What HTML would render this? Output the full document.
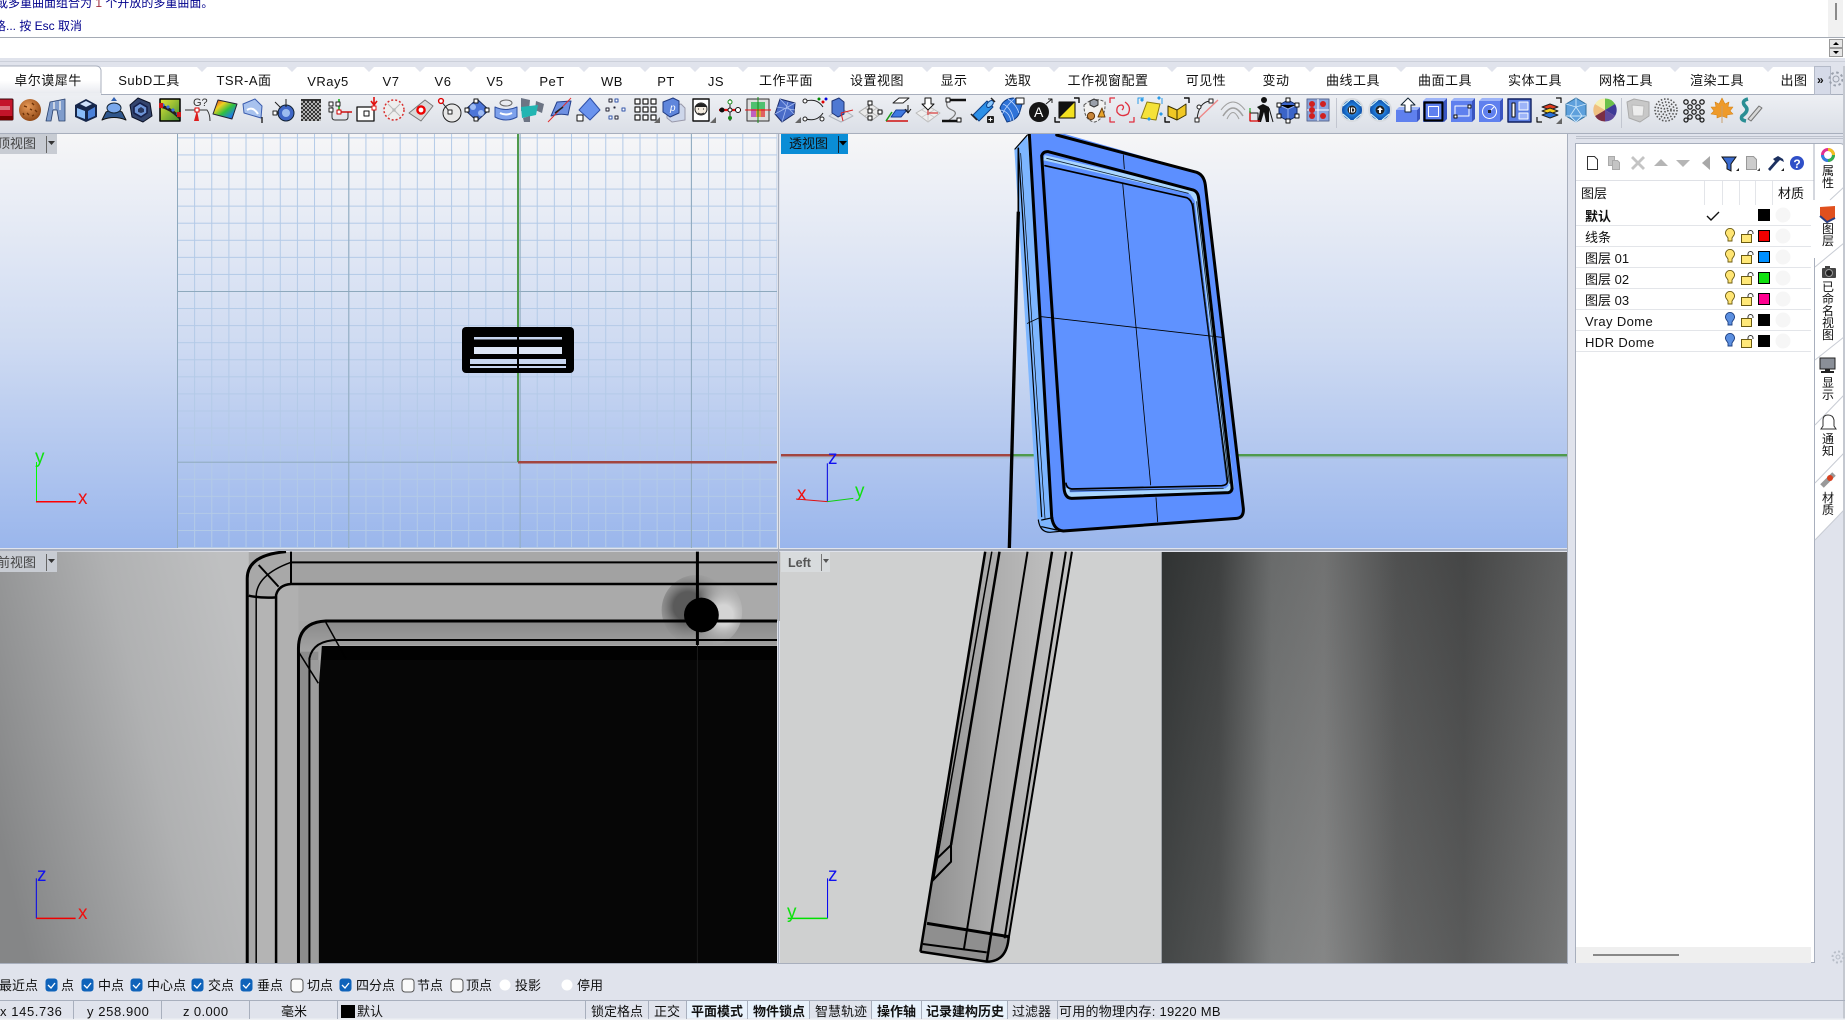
<!DOCTYPE html>
<html lang="zh"><head><meta charset="utf-8"><title>Rhino</title>
<style>
html,body{margin:0;padding:0;width:1845px;height:1020px;overflow:hidden;background:#e0e3ec}
body{position:relative;font-family:"Liberation Sans","Noto Sans CJK SC",sans-serif;font-size:13px;color:#111}
svg.all{position:absolute;left:0;top:0}
.t{position:absolute;white-space:nowrap;line-height:18px;height:18px}
.c{transform:translateX(-50%);letter-spacing:.5px}
.v{left:1828px;transform:translateX(-50%);line-height:14px;height:14px;font-size:12px}
.cmd{color:#00008c;font-size:12px}
.b{font-weight:bold}
</style></head><body>
<svg class="all" width="1845" height="1020" viewBox="0 0 1845 1020" xmlns="http://www.w3.org/2000/svg">
<defs>
<linearGradient id="vp" x1="0" y1="0" x2="0" y2="1"><stop offset="0" stop-color="#f6f6f7"/><stop offset=".5" stop-color="#cfdbf2"/><stop offset="1" stop-color="#9ab6ec"/></linearGradient>
<linearGradient id="tb" x1="0" y1="0" x2="0" y2="1"><stop offset="0" stop-color="#eef0f4"/><stop offset="1" stop-color="#dadee6"/></linearGradient>
<linearGradient id="act" x1="0" y1="0" x2="0" y2="1"><stop offset="0" stop-color="#fff"/><stop offset=".5" stop-color="#fff"/><stop offset="1" stop-color="#e6e8ee"/></linearGradient>
<linearGradient id="fg" x1="0" y1=".7" x2="1" y2=".3"><stop offset="0" stop-color="#858687"/><stop offset=".6" stop-color="#b0b1b2"/><stop offset="1" stop-color="#bfc0c1"/></linearGradient>
<linearGradient id="dk" x1="0" y1="0" x2="1" y2="0"><stop offset="0" stop-color="#343737"/><stop offset=".14" stop-color="#434545"/><stop offset=".27" stop-color="#727474"/><stop offset=".40" stop-color="#7b7c7c"/><stop offset=".58" stop-color="#565757"/><stop offset=".745" stop-color="#4b4c4c"/><stop offset="1" stop-color="#6a6b6b"/></linearGradient>
<linearGradient id="dkv" x1="0" y1="0" x2="0" y2="1"><stop offset="0" stop-color="#000" stop-opacity=".08"/><stop offset="1" stop-color="#fff" stop-opacity=".08"/></linearGradient>
<linearGradient id="bl" x1="0" y1="0" x2="0" y2="1"><stop offset="0" stop-color="#a6c0ff"/><stop offset="1" stop-color="#4c6ee4"/></linearGradient>
<linearGradient id="rb" x1="0" y1="0" x2="1" y2="1"><stop offset="0" stop-color="#e02020"/><stop offset=".3" stop-color="#f0d020"/><stop offset=".55" stop-color="#30c040"/><stop offset=".8" stop-color="#2080e0"/><stop offset="1" stop-color="#3020a0"/></linearGradient>
<linearGradient id="yl" x1="0" y1="0" x2="1" y2="1"><stop offset="0" stop-color="#fff6a0"/><stop offset="1" stop-color="#eec820"/></linearGradient>
<linearGradient id="gl" x1="0" y1="0" x2="1" y2="1"><stop offset="0" stop-color="#e8e838"/><stop offset="1" stop-color="#3a8c30"/></linearGradient>
<radialGradient id="ball" cx=".4" cy=".35" r=".7"><stop offset="0" stop-color="#e89a58"/><stop offset="1" stop-color="#8c4412"/></radialGradient>
<radialGradient id="ir" cx=".5" cy=".5" r=".5"><stop offset="0" stop-color="#bfe0ff"/><stop offset=".55" stop-color="#1d7ad8"/><stop offset="1" stop-color="#0d4ea8"/></radialGradient>
<radialGradient id="hd" cx=".38" cy=".45" r=".6"><stop offset=".35" stop-color="#5a5a5a"/><stop offset="1" stop-color="#a8a8a8" stop-opacity="0"/></radialGradient>
<radialGradient id="hl" cx=".7" cy=".55" r=".5"><stop offset=".3" stop-color="#d4d4d4"/><stop offset="1" stop-color="#a8a8a8" stop-opacity="0"/></radialGradient>
<linearGradient id="tp" x1="0" y1="0" x2="0" y2="1"><stop offset="0" stop-color="#8a8a8a"/><stop offset=".7" stop-color="#b0b0b0"/><stop offset="1" stop-color="#8a8a8a"/></linearGradient>
<linearGradient id="sd" x1="0" y1="0" x2="1" y2="0"><stop offset="0" stop-color="#8d8d8d"/><stop offset=".5" stop-color="#aeaeae"/><stop offset="1" stop-color="#c4c4c4"/></linearGradient>
<pattern id="mi" patternUnits="userSpaceOnUse" x="177" y="120.3" width="17.13" height="17.07"><path d="M.5 0V17.07M0 .5H17.13" stroke="#b3cae7" fill="none"/></pattern>
<pattern id="ma" patternUnits="userSpaceOnUse" x="177" y="120.3" width="171.3" height="170.7"><path d="M.5 0V170.7M0 .5H171.3" stroke="#8ea9bd" fill="none"/></pattern>
</defs>

<!-- top command area -->
<rect x="0" y="0" width="1845" height="37" fill="#fff"/>
<rect x="1828" y="0" width="15" height="37" fill="#f1f1f1"/>
<rect x="1835" y="3" width="2" height="17" fill="#8a8a8a"/>
<rect x="0" y="37" width="1845" height="1" fill="#a5abb5"/>
<rect x="0" y="38" width="1845" height="20" fill="#fff"/>
<rect x="1829.5" y="39.5" width="13" height="8" fill="#e6e6e6" stroke="#999"/><path d="M1833 45h6l-3-3z" fill="#000"/>
<rect x="1829.5" y="48.5" width="13" height="8" fill="#e6e6e6" stroke="#999"/><path d="M1833 51h6l-3 3z" fill="#000"/>
<rect x="0" y="61" width="1845" height="1" fill="#ccd0da"/>

<!-- tabs -->
<rect x="0" y="67" width="1814" height="27" fill="#fff"/>
<g fill="#e0e3ec">
<path d="M197 67h10l-5 5zM287 67h10l-5 5zM364 67h10l-5 5zM415 67h10l-5 5zM466 67h10l-5 5zM520 67h10l-5 5zM579 67h10l-5 5zM640 67h10l-5 5zM690 67h10l-5 5zM738 67h10l-5 5zM829 67h10l-5 5zM922 67h10l-5 5zM984 67h10l-5 5zM1049 67h10l-5 5zM1167 67h10l-5 5zM1244 67h10l-5 5zM1305 67h10l-5 5zM1396 67h10l-5 5zM1487 67h10l-5 5zM1580 67h10l-5 5zM1670 67h10l-5 5zM1763 67h10l-5 5z"/>
</g>
<rect x="0" y="94" width="1845" height="40" fill="url(#tb)"/>
<rect x="0" y="94" width="1845" height="1" fill="#a8afbd"/>
<rect x="0" y="133" width="1845" height="1" fill="#a8afbd"/>
<path d="M-2 95V66H96Q100 66 101 70V95Z" fill="url(#act)"/>
<path d="M-2 66H96Q100 66 101 70V94" fill="none" stroke="#a8afbd"/>
<rect x="0" y="93" width="101" height="3" fill="#eceef2"/>
<rect x="1814.5" y="66.5" width="16" height="28" fill="#d5dae8" stroke="#b4bac8"/>

<!-- toolbar icons -->
<g stroke-linejoin="round">
<g transform="translate(5,110)"><rect x="-9" y="-11" width="17" height="21" rx="1" fill="#c4142a" stroke="#3a0a10"/><rect x="-9" y="6" width="17" height="4" fill="#700"/><path d="M-8-3H5M-8-1H5" stroke="#f5d0d0" stroke-width=".9" fill="none"/></g>
<g transform="translate(30,110)"><circle r="11" fill="url(#ball)"/><path d="M-6-4l3 1M2-7l2 2M5 0l2 2M-3 3l2 2M0-1l2 1M-7 3l1 2M2 6l2-1" stroke="#6d3208" stroke-width="1.4"/></g>
<g transform="translate(56,110)"><path d="M-10 11L-6-8 9-11V11H3L1 0-3 0-5 11Z" fill="#7f9ccc" stroke="#29406c" stroke-width=".8"/><path d="M-2-8V-1M4-9V0" stroke="#eee" stroke-width="1.4"/></g>
<g transform="translate(86,110)"><path d="M-11-5L0-11 11-5V7L0 12-11 7Z" fill="#16264a"/><path d="M-9-2L-1 1V9L-9 6Z" fill="#8abcf8"/><path d="M2 1L9-3V6L2 9Z" fill="#4a80d8"/><path d="M-6-6L0-9 6-6 0-3Z" fill="#cfe0fa"/></g>
<g transform="translate(114,110)"><path d="M-12 10L-8 2Q0-3 8 2L12 10Q0 5-12 10Z" fill="#2f568c" stroke="#111"/><ellipse cy="-2" rx="7" ry="5" fill="#7aa8ec" stroke="#123"/><path d="M0-13l-3 4h6z" fill="#3060b0"/></g>
<g transform="translate(141,110)"><path d="M-3-12L9-7 11 6 2 12-9 7-11-5Z" fill="#34456e" stroke="#0c1226"/><path d="M-1-7L6-3 6 3 0 7-7 3-7-3Z" fill="#6f96d8" stroke="#16204a" stroke-width="1.6"/><path d="M0-3L3-1 3 2 0 3-3 2-3-1Z" fill="#27365e"/></g>
<g transform="translate(170,110)"><rect x="-10" y="-11" width="20" height="22" fill="url(#gl)" stroke="#000" stroke-width="1.5"/><path d="M-10-4Q0-2 10 8" stroke="#222" stroke-width="3" fill="none"/><path d="M-8-6l2 2M-3-4l2 2M2-1l2 2M7 3l2 2" stroke="#3b6fe0" stroke-width="3"/><rect x="-11" y="-7" width="4" height="5" fill="#d01818"/><rect x="7" y="2" width="4" height="5" fill="#d01818"/></g>
<g transform="translate(197,110)"><text x="-4" y="-4" font-size="11" font-family="Liberation Sans" fill="#333">G?</text><path d="M-12 0H10Q13 4 13 11" stroke="#333" fill="none"/><path d="M0 0l2 11h-5z" fill="#dd1c1c"/><rect x="-2" y="-2" width="4" height="4" fill="#fff" stroke="#d00"/></g>
<g transform="translate(225,110)"><path d="M-7-10L12-6 7 9-12 4Z" fill="url(#rb)" stroke="#223"/></g>
<g transform="translate(253,110)"><path d="M-10-6L2-11 9-4 8 8-9 3Z" fill="#a8c2ee" stroke="#3a5cae"/><path d="M-6 0Q0-4 5 4" stroke="#fff" stroke-width="2" fill="none"/><path d="M9 7v6" stroke="#222" stroke-width="1.4"/></g>
<g transform="translate(283,110)"><circle cx="3" cy="3" r="8" fill="#3f66c6" stroke="#123"/><circle cx="3" cy="3" r="4" fill="#9cbcf0"/><path d="M3-11v8M-10 3h6M-8-8l6 6" stroke="#222"/><rect x="-10" y="1" width="4" height="4" fill="#fff" stroke="#222"/></g>
<g transform="translate(311,110)"><rect x="-10" y="-11" width="20" height="22" fill="#333"/><path d="M-10-8h20M-10-4h20M-10 0h20M-10 4h20M-10 8h20" stroke="#ddd" stroke-width="1.5" stroke-dasharray="2 2"/><path d="M-10-6h20M-10-2h20M-10 2h20M-10 6h20M-10 10h20" stroke="#ddd" stroke-width="1.5" stroke-dasharray="2 2" stroke-dashoffset="2"/></g>
<g transform="translate(339,110)"><path d="M-7-3V7Q-7 10-4 10H6Q9 10 9 7V2" fill="none" stroke="#333"/><path d="M0 2H13" stroke="#c00" stroke-width="1.4"/><path d="M0 2V-11" stroke="#0a0" stroke-width="1.4"/><g fill="#fff" stroke="#222"><rect x="-10" y="-8" width="4" height="4"/><rect x="-10" y="-2" width="4" height="4"/><rect x="-3" y="-8" width="4" height="4"/></g><rect x="-2" y="0" width="4" height="4" fill="#fff" stroke="#c00"/></g>
<g transform="translate(367,110)"><rect x="-10" y="-3" width="17" height="14" fill="#fff" stroke="#111" stroke-width="1.3"/><rect x="-3" y="1" width="5" height="5" fill="#fff" stroke="#111"/><path d="M7-13V-6M4-9l3 4 3-4" stroke="#e01010" stroke-width="1.6" fill="none"/><rect x="5" y="-4" width="4" height="4" fill="#fff" stroke="#e01010"/></g>
<g transform="translate(394,110)"><circle r="10" fill="#eee" stroke="#d93030" stroke-dasharray="2 2" stroke-width="1.5"/><circle r="1.6" fill="#aaa"/><path d="M-6-6L6 6M-6 6L6-6" stroke="#bbb"/></g>
<g transform="translate(421,110)"><path d="M-12 3L4-10 12-4 0 11Z" fill="#d8d8d8" stroke="#777"/><circle cy="0" r="3.6" fill="#fff" stroke="#e00" stroke-width="2.4"/></g>
<g transform="translate(450,110)"><circle cx="2" cy="3" r="9" fill="#e8e8e8" stroke="#222"/><path d="M-9-9L-1 1" stroke="#222"/><circle cx="-9" cy="-9" r="2.4" fill="#fff" stroke="#d00" stroke-width="1.4"/><rect x="-2" y="0" width="4" height="4" fill="#fff" stroke="#222"/></g>
<g transform="translate(477,110)"><path d="M-12 0L0-11 12 0 0 11Z" fill="#4d75d8" stroke="#1c2e60"/><g fill="#fff" stroke="#111"><rect x="-3" y="-11" width="4" height="4"/><rect x="-12" y="-2" width="4" height="4"/><rect x="8" y="-2" width="4" height="4"/><rect x="-3" y="7" width="4" height="4"/></g><circle cx="-4" cy="-3" r="3" fill="#9fbcf4"/><circle cx="4" cy="3" r="3" fill="#9fbcf4"/></g>
<g transform="translate(506,110)"><path d="M-11-3Q0 2 11-3V7Q0 13-11 7Z" fill="#7ea1ec" stroke="#2f4fa0"/><ellipse cy="-7" rx="6" ry="3" fill="none" stroke="#666"/><path d="M-6 3Q0 6 6 3" stroke="#fff" stroke-width="2" fill="none"/></g>
<g transform="translate(533,110)"><path d="M-12-12L-3-10-4 0-12 1Z" fill="#6c7484"/><path d="M3-9L11-6 9 3 2 0Z" fill="#6c7484"/><path d="M-12-3L5-5 3 5-11 8Z" fill="#22b5b2"/><path d="M-10 8L-3 6-3 12-9 12Z" fill="#6c7484"/></g>
<g transform="translate(560,110)"><path d="M-9 6L-3-8 11-9 8 5Q0 3-9 6Z" fill="#6e90e2" stroke="#24408c"/><path d="M-12 12L11-12" stroke="#e03030"/><path d="M-5 3L3-3" stroke="#222" stroke-width="1.6"/></g>
<g transform="translate(589,110)"><path d="M-10 0L1-12 11 0 1 10Z" fill="#6a93ee" stroke="#2f50a8"/><rect x="-12" y="5" width="6" height="6" fill="#fff" stroke="#111"/></g>
<g transform="translate(617,110)" fill="#fff" stroke="#223"><rect x="-8" y="-11" width="3" height="3"/><rect x="-2" y="-11" width="3" height="3" stroke="#35a"/><rect x="-11" y="-2" width="3" height="3"/><rect x="5" y="-2" width="3" height="3" stroke="#35a"/><rect x="-8" y="6" width="3" height="3" stroke="#35a"/><rect x="-2" y="6" width="3" height="3"/><path d="M-3-3h1v1h-1z"/></g>
<g transform="translate(646,110)" fill="#fff" stroke="#222" stroke-width="1.2"><rect x="-11" y="-11" width="5" height="5"/><rect x="-3" y="-11" width="5" height="5"/><rect x="5" y="-11" width="5" height="5"/><rect x="-11" y="-3" width="5" height="5"/><rect x="-3" y="-3" width="5" height="5"/><rect x="5" y="-3" width="5" height="5"/><rect x="-11" y="5" width="5" height="5"/><rect x="-3" y="5" width="5" height="5"/><rect x="5" y="5" width="5" height="5"/><path d="M8 13h6v-6z" fill="#666" stroke="none"/></g>
<g transform="translate(673,110)"><path d="M-6-3L8-6 12-2 12 10-1 12-6 8Z" fill="#cdd6ea" stroke="#99a"/><path d="M-10-8L0-12 6-9 6 3-3 7-10 2Z" fill="#5f86dc" stroke="#203a80"/><text x="-3" y="1" font-size="10" font-style="italic" font-family="Liberation Sans" fill="#fff">p</text></g>
<g transform="translate(701,110)"><rect x="-8" y="-11" width="16" height="22" fill="#fff" stroke="#111" stroke-width="1.4"/><circle cy="-1" r="6" fill="#f4ece0" stroke="#222"/><path d="M-6-3Q0-9 6-3" fill="#222" stroke="#222"/><path d="M-3 3Q0 5 3 3M-3-1h1M2-1h1" stroke="#222" fill="none"/><path d="M9 13h6v-6z" fill="#666"/></g>
<g transform="translate(730,110)"><path d="M0-11V11" stroke="#222"/><path d="M-11 0H11" stroke="#e01010" stroke-width="2.2"/><circle cx="-8" r="2.5" fill="#111"/><circle cx="8" r="2.5" fill="#fff" stroke="#111"/><circle r="2" fill="#fff" stroke="#111"/><circle cy="-8" r="2" fill="#fff" stroke="#1a8a1a"/><circle cy="8" r="2" fill="#1a8a1a"/></g>
<g transform="translate(758,110)"><rect x="-11" y="-11" width="22" height="22" fill="#ddd" stroke="#333"/><rect x="-7" y="-8" width="14" height="7" fill="#50c070"/><rect x="-7" y="-1" width="5" height="8" fill="#c060c0"/><rect x="-2" y="-1" width="5" height="8" fill="#e0a040"/><rect x="3" y="-1" width="4" height="8" fill="#e06060"/><path d="M-13 0H13" stroke="#e01010"/><path d="M0-13V13" stroke="#168a16"/></g>
<g transform="translate(786,110)"><path d="M-6-11L9-7 8 4-4 12-11 4Z" fill="#4a6cc8" stroke="#1c2c68"/><path d="M-6-11L8 4M-11 4L9-7M-4 12L2-8M-9-3L9 0" stroke="#a6bcf0" stroke-width=".8"/><path d="M9 13h6v-6z" fill="#666"/></g>
<g transform="translate(814,110)" fill="none" stroke="#222"><path d="M-8-9Q3-12 9-3M9 3Q3 12-8 9"/><g fill="#fff"><circle cx="-9" cy="-9" r="2"/><circle cx="-9" cy="9" r="2"/><circle cx="8" cy="9" r="2"/></g><circle cx="9" cy="-8" r="1.5" fill="#d00" stroke="none"/><circle cx="5" cy="-11" r="1.5" fill="#080" stroke="none"/><circle cx="12" cy="-11" r="1.5" fill="#00d" stroke="none"/></g>
<g transform="translate(841,110)"><path d="M-12 6L0-2 12 6 0 12Z" fill="#e2e4e8" stroke="#b0b4bc"/><path d="M-9-9L-2-12 3-8 3 4-3 7-9 3Z" fill="#4e78d2" stroke="#1e3474"/><path d="M0 3L12 0M0 3L2 11" stroke="#d22"/></g>
<g transform="translate(871,110)"><path d="M-12 2L0-6 12 2 0 11Z" fill="#eaeaea" stroke="#aaa"/><path d="M-6-2L6 6M6-2L-6 6" stroke="#bbb"/><path d="M-2 0V-8" stroke="#222"/><g fill="#fff" stroke="#111"><rect x="-3" y="-9" width="4" height="4"/><rect x="-3" y="-1" width="4" height="4"/><rect x="7" y="0" width="4" height="4"/><rect x="-3" y="6" width="4" height="4"/></g></g>
<g transform="translate(898,110)"><path d="M-5-7L1-12H11L5-7Z" fill="#fff" stroke="#222"/><path d="M-7 7L-2 0H9L3 7Z" fill="#3f79e0" stroke="#153a90"/><path d="M-12 11H10" stroke="#d01010" stroke-width="1.5"/><path d="M-12 11L-6 2" stroke="#189a18" stroke-width="1.5"/><path d="M10-5V2M7-1l3 4 3-4" stroke="#111" fill="none"/></g>
<g transform="translate(928,110)"><path d="M-12 3L0-4 12 3 0 12Z" fill="#efefef" stroke="#bbb"/><path d="M-6 0L6 7M6 0L-6 7M0-4V12" stroke="#ccc"/><path d="M0 5V-2" stroke="#d01010"/><path d="M-3-12H3V-6H6L0 0-6-6H-3Z" fill="#fff" stroke="#111"/><path d="M1 3H10" stroke="#d01010"/></g>
<g transform="translate(954,110)" fill="none" stroke="#111"><path d="M-5-10H12" stroke-width="2.6"/><path d="M-6-10Q-10-3-2 0T-5 10" stroke="#777" stroke-width="1.2"/><path d="M-12 11H5" stroke-width="2.6"/><rect x="-8" y="-12" width="4" height="4" fill="#fff"/><rect x="3" y="8" width="4" height="4" fill="#fff"/></g>
<g transform="translate(984,110)"><path d="M-11 5L3-9 9-3-5 11Z" fill="#2c90e8" stroke="#0d3f86"/><ellipse cx="6" cy="-6" rx="2.5" ry="4.2" transform="rotate(45 6 -6)" fill="#8ccaff" stroke="#0d3f86"/><path d="M7-12L11-8M-13 4L-7 10" stroke="#222" stroke-width="1.5"/><rect x="3" y="6" width="7" height="7" rx="1" fill="#222"/><path d="M4.5 9.500h4M6.500 7.500v4" stroke="#fff"/></g>
<g transform="translate(1011,110)"><path d="M-11-2Q-8-11 2-12L12-9 9 1Q7 10-4 12Z" fill="#2f73d8" stroke="#103c84"/><path d="M-8-6Q0-3 3 11M-3-11Q5-6 8 3M-11 0Q-2 1 0 11M4-12Q-6-3-9 5" stroke="#bcd6ff" stroke-width=".8" fill="none"/><rect x="5" y="-12" width="8" height="6" fill="#fff" stroke="#222"/></g>
<g transform="translate(1039,110)"><circle cy="2" r="10" fill="#151515"/><text x="-5" y="7" font-size="14" font-family="Liberation Sans" fill="#fff">A</text><path d="M7-6L13-11M9-11h4v4" stroke="#222" fill="none"/></g>
<g transform="translate(1067,110)"><path d="M-8-8H8V8H-8Z" fill="#f2e020" stroke="#000"/><path d="M-8 8L8-8H-8Z" fill="#111"/><path d="M7-12h5v5M-12 7v5h5" stroke="#111" fill="none" stroke-width="1.4"/></g>
<g transform="translate(1094,110)"><path d="M-10-5Q0-14 11-8 12 8 1 12-10 11-10-5Z" fill="#f1f1f1" stroke="#555" stroke-dasharray="3 1.500"/><path d="M-4-9L0-11 4-9 4-5 0-3-4-5Z" fill="#9aa0aa" stroke="#333"/><path d="M4 7L8-2 11 7Z" fill="#e8a428" stroke="#6a4010"/><circle cx="-3" cy="6" r="3.6" fill="#c8863a" stroke="#5a3008"/></g>
<g transform="translate(1122,110)"><g fill="none" stroke="#e03040" stroke-width="1.3"><path d="M0 0Q3-3 0-5-6-5-5 2-1 8 6 4 10-3 3-8"/><path d="M-12-7v-5h5M7 12h5v-5M-12 7v5h5"/></g></g>
<g transform="translate(1150,110)"><path d="M-9 8L-3-8 10-6 6 10Z" fill="#f5e238" stroke="#8a7a10"/><g fill="#2a9be8"><path d="M-10-10l2-2 2 2-2 2zM7-12l2-2 2 2-2 2zM-3 9l2-2 2 2-2 2zM9 4l2-2 2 2-2 2z"/></g><path d="M-12-6v-6h6M12-6v-6" stroke="#2a9be8" fill="none"/></g>
<g transform="translate(1177,110)"><path d="M-9-4L0 0 9-6 9 5 0 10-9 6Z" fill="#f0c824" stroke="#3a3000"/><path d="M0 0V10" stroke="#3a3000"/><path d="M7-12h5v5M-12 7v5h5" stroke="#111" fill="none" stroke-width="1.4"/></g>
<g transform="translate(1207,110)"><path d="M-10 9Q-8-8 3-9" fill="none" stroke="#222"/><path d="M-10 10L11-10" stroke="#e88" stroke-width="1.4"/><g fill="#fff" stroke="#222"><rect x="-12" y="8" width="4" height="4"/><rect x="2" y="-11" width="4" height="4"/><circle cx="-8" cy="-3" r="2"/></g></g>
<g transform="translate(1233,110)" fill="none" stroke="#a0a0a0"><path d="M-10 6Q0-10 10 6" stroke-width="1.5"/><path d="M-6 9Q0-4 6 9"/><path d="M-12 0Q0-16 12 0"/></g>
<g transform="translate(1261,110)"><path d="M-4-3L2-6 8-3 8 12H5L3 2 0 12H-3L-1 0Z" fill="#111"/><circle cx="3" cy="-10" r="3" fill="#111"/><path d="M8-2L12 12" stroke="#111"/><rect x="-11" y="3" width="8" height="8" fill="none" stroke="#111"/><path d="M-11 11H-1M-11 11V1" stroke="#d00" stroke-width="1.3"/><path d="M-11 3V-2" stroke="#090"/></g>
<g transform="translate(1288,110)"><path d="M-9-5L0-10 9-5V6L0 11-9 6Z" fill="#3b64c8" stroke="#112a68"/><path d="M-9-5L0-1 9-5M0-1V11" stroke="#90aef0"/><g fill="#fff" stroke="#111"><rect x="-11" y="-7" width="4" height="4"/><rect x="7" y="-7" width="4" height="4"/><rect x="-2" y="9" width="4" height="4"/><rect x="-11" y="4" width="4" height="4"/><rect x="7" y="4" width="4" height="4"/><rect x="-2" y="-12" width="4" height="4"/></g></g>
<g transform="translate(1318,110)"><rect x="-11" y="-11" width="22" height="22" fill="#8aa4dc" stroke="#5a6a92"/><path d="M-11 0H11M0-11V11" stroke="#fff"/><g fill="#d02020"><circle cx="-6" cy="-6" r="3"/><circle cx="-6" cy="0" r="3"/><circle cx="-6" cy="6" r="3"/><circle cx="5" cy="-6" r="3"/><circle cx="5" cy="6" r="3"/></g></g>
<rect x="1336" y="98" width="1" height="30" fill="#c2c6d0"/>
<g transform="translate(1352,110)"><circle r="12" fill="#d8dbe0"/><circle r="10" fill="url(#ir)"/><circle r="4.500" fill="#222"/><path d="M-9-4L-2-10M9-4L2-10M-9 4L-2 10M9 4L2 10" stroke="#dff" stroke-width="1"/><text x="-3.500" y="2.500" font-size="7" fill="#fff" font-family="Liberation Sans" font-weight="bold">ID</text></g>
<g transform="translate(1380,110)"><circle r="12" fill="#d8dbe0"/><circle r="10" fill="url(#ir)"/><circle r="4.500" fill="#222"/><path d="M-9-4L-2-10M9-4L2-10M-9 4L-2 10M9 4L2 10" stroke="#dff" stroke-width="1"/><path d="M0-3l-3 3h2v3h2v-3h2z" fill="#fff"/></g>
<g transform="translate(1408,110)"><path d="M-12 0H9V12H-12Z" fill="#5f80ee"/><path d="M9 0L12-3V9L9 12Z" fill="#3a54c0"/><path d="M-12 0L-9-3H12L9 0Z" fill="#9db4f8"/><path d="M0-12L-7-5H-3V2H3V-5H7Z" fill="#fff" stroke="#123"/></g>
<g transform="translate(1435,110)"><path d="M-12-9H9V12H-12Z" fill="#5f80ee"/><path d="M9-9L12-12V9L9 12Z" fill="#3a54c0"/><path d="M-12-9L-9-12H12L9-9Z" fill="#9db4f8"/><rect x="-10.500" y="-7.500" width="18" height="18" fill="none" stroke="#000" stroke-width="2.200"/><rect x="-6.500" y="-3.500" width="10" height="10" fill="none" stroke="#fff"/></g>
<g transform="translate(1463,110)"><path d="M-12-9H9V12H-12Z" fill="#5f80ee"/><path d="M9-9L12-12V9L9 12Z" fill="#3a54c0"/><path d="M-12-9L-9-12H12L9-9Z" fill="#9db4f8"/><rect x="-8" y="-4" width="14" height="10" fill="none" stroke="#fff"/><rect x="-9" y="5" width="3" height="3" fill="#fff" stroke="#111"/><rect x="5" y="-5" width="3" height="3" fill="#fff" stroke="#111"/></g>
<g transform="translate(1491,110)"><path d="M-12-9H9V12H-12Z" fill="#5f80ee"/><path d="M9-9L12-12V9L9 12Z" fill="#3a54c0"/><path d="M-12-9L-9-12H12L9-9Z" fill="#9db4f8"/><circle cx="-1.500" cy="1.500" r="7" fill="none" stroke="#fff"/><path d="M-3 3L3-3" stroke="#fff"/><rect x="-3" y="0" width="3" height="3" fill="#222"/></g>
<g transform="translate(1520,110)"><rect x="-12" y="-11" width="23" height="23" fill="#5a7ce0" stroke="#112060" stroke-width="1.400"/><rect x="-8" y="-7" width="3" height="14" fill="#fff" stroke="#111"/><rect x="-1" y="-8" width="9" height="8" fill="#9db4f8" stroke="#fff"/><rect x="-1" y="3" width="9" height="6" fill="#9db4f8" stroke="#fff"/></g>
<g transform="translate(1549,110)"><path d="M-7-3L1-6 9-3 1 0Z" fill="#e03a20" stroke="#222"/><path d="M-7 1L1-2 9 1 1 4Z" fill="#f5d020" stroke="#222"/><path d="M-7 5L1 2 9 5 1 8Z" fill="#2a70d8" stroke="#222"/><path d="M7-12h5v5M-12 7v5h5" stroke="#111" fill="none" stroke-width="1.200"/><path d="M7 14h6v-6z" fill="#666"/></g>
<g transform="translate(1576,110)"><path d="M0-12L10-6V6L0 12-10 6V-6Z" fill="#5ea0dc" stroke="#33709f"/><path d="M-10-6L0-3 10-6M0-3L-6 6H6ZM-10 6L-6 6M10 6L6 6M0-12V-3M-6 6L0 12 6 6" stroke="#cbe6fa" stroke-width=".9" fill="none"/></g>
<g transform="translate(1605,110)"><circle r="11.500" fill="#ddd"/><path d="M0 0V-11.500A11.500 11.500 0 0 1 10-6Z" fill="#6cc04a"/><path d="M0 0L10-6A11.500 11.500 0 0 1 10 6Z" fill="#3f3a96"/><path d="M0 0L10 6A11.500 11.500 0 0 1 0 11.500Z" fill="#5e4a9c"/><path d="M0 0V11.500A11.500 11.500 0 0 1-10 6Z" fill="#7c2e44"/><path d="M0 0L-10 6A11.500 11.500 0 0 1-10-6Z" fill="#f0c080"/><path d="M0 0L-10-6A11.500 11.500 0 0 1 0-11.500Z" fill="#f5f0b0"/></g>
<rect x="1621" y="98" width="1" height="30" fill="#c2c6d0"/>
<g transform="translate(1638,110)"><path d="M-11-8L-4-11 11-8V6L2 12-9 8Z" fill="#c8c8c8" stroke="#aaa"/><path d="M-6-5L6-4 5 6-5 6Z" fill="#ededed" stroke="#bbb"/></g>
<g transform="translate(1666,110)"><circle r="11" fill="none" stroke="#555" stroke-width="1.600" stroke-dasharray="1.500 1.800"/><circle r="8" fill="none" stroke="#555" stroke-width="1.600" stroke-dasharray="1.500 1.800"/><circle r="5" fill="none" stroke="#555" stroke-width="1.600" stroke-dasharray="1.500 1.800"/><circle r="2" fill="none" stroke="#555" stroke-width="1.600" stroke-dasharray="1.500 1.800"/></g>
<g transform="translate(1694,110)" fill="none" stroke="#222" stroke-width="1.300"><circle cx="-8" cy="-8" r="2.200"/><circle cx="0" cy="-8" r="2.200"/><circle cx="8" cy="-8" r="2.200"/><circle cx="-4" cy="-3" r="2.200"/><circle cx="4" cy="-3" r="2.200"/><circle cx="-8" cy="2" r="2.200"/><circle cx="0" cy="2" r="2.200"/><circle cx="8" cy="2" r="2.200"/><circle cx="-4" cy="7" r="2.200"/><circle cx="4" cy="7" r="2.200"/><circle cx="-8" cy="10" r="2"/><circle cx="8" cy="10" r="2"/></g>
<g transform="translate(1722,110)"><path d="M0-12L3-6 7-8 6-3 11-3 8 1 11 4 5 5 5 8 0 6-5 8-5 5-11 4-8 1-11-3-6-3-7-8-3-6Z" fill="#ee9a2a" stroke="#d48418" stroke-width=".6"/><path d="M0-4V13" stroke="#c8a070"/></g>
<g transform="translate(1750,110)"><path d="M-2-11Q-10-9-4-3-1 1-8 6-10 10-4 11" fill="none" stroke="#2a8e94" stroke-width="3.600"/><path d="M-2 9L9-4 12-2 1 11Z" fill="#d8d8d8" stroke="#777"/></g>
</g>
<g transform="translate(1836,79)" fill="none" stroke="#9aa0ac"><circle r="3"/><circle r="6.500" stroke-width="2" stroke-dasharray="2.500 2.600"/></g>

<!-- top-left viewport -->
<rect x="0" y="134" width="777" height="414" fill="url(#vp)"/>
<rect x="177" y="134" width="600" height="414" fill="url(#mi)"/>
<rect x="177" y="134" width="600" height="414" fill="url(#ma)"/>
<rect x="517" y="134" width="2" height="328" fill="#4f9a4c"/>
<rect x="518" y="461" width="259" height="2.500" fill="#a2453f"/>
<rect x="462" y="327" width="112" height="46" rx="4" fill="#000"/>
<g fill="#c8d6f0"><rect x="474" y="337" width="88" height="2.500"/><rect x="474" y="347" width="88" height="7" fill="#dde6f6"/><rect x="470" y="359" width="96" height="5"/><rect x="470" y="366" width="96" height="2"/></g>
<rect x="517" y="327" width="2" height="46" fill="#000"/>
<rect x="0" y="134" width="57" height="20" fill="#c8ccd3"/>
<path d="M46.500 136V153" stroke="#666"/><path d="M48 141h7l-3.500 4z" fill="#333"/>
<rect x="36" y="462" width="1" height="40" fill="#0f0"/><rect x="36" y="501" width="40" height="1.500" fill="#f00"/>

<!-- perspective -->
<rect x="780" y="134" width="787" height="414" fill="url(#vp)"/>
<rect x="781" y="454" width="229" height="2.500" fill="#a2453f"/>
<rect x="1010" y="454" width="557" height="2.500" fill="#4f9a4c"/>
<rect x="781" y="457" width="786" height="1.500" fill="#a6bcd2"/>
<svg x="770" y="125" width="500" height="430" viewBox="0 0 1500 1290">
<clipPath id="pc"><rect x="30" y="27" width="1470" height="1242"/></clipPath>
<g clip-path="url(#pc)">
<path d="M733 72L772 28 868 1215 835 1225Q808 1218 803 1180Z" fill="#7db6ff"/>
<path d="M775 20H860L1280 140Q1305 150 1308 180L1422 1150Q1425 1178 1400 1182L880 1220Q855 1215 848 1180Z" fill="#5c8fff"/>
<path d="M828 120L1250 218Q1265 225 1270 245L1374 1070Q1375 1082 1355 1084L905 1094Q890 1092 888 1075Z" fill="#5f92ff"/>
<path d="M822 98L1265 200 1282 225 1384 1085 1370 1098 895 1110 888 1090" fill="none" stroke="#a9d6ff" stroke-width="16"/>
<g fill="none" stroke="#000" stroke-linecap="round">
<path d="M1060 90L1063 132M1058 175L1142 1080M1158 1118L1163 1190M772 595L815 575 1355 637" stroke-width="2.500"/>
<path d="M860 30L1280 142Q1302 150 1306 180L1420 1150Q1422 1178 1400 1180L880 1218Q850 1215 845 1175L778 28" stroke-width="9"/>
<path d="M815 92Q820 78 835 80L1270 195Q1284 200 1286 220L1386 1085Q1388 1100 1375 1103L905 1120Q885 1120 882 1090Z" stroke-width="9"/>
<path d="M825 122L1250 218Q1265 225 1268 245L1372 1065Q1375 1080 1355 1082L905 1092Q890 1090 888 1075" stroke-width="5"/>
<path d="M745 70L815 1175M735 72L772 30M805 1185Q810 1222 840 1222L880 1218M815 1185L848 1178M815 1205L860 1215" stroke-width="3.500"/>
<path d="M752 85L825 1180" stroke-width="2"/>
<path d="M1270 235L1370 1068M1280 230L1378 1075M900 1098L1360 1090M830 100L1255 205" stroke-width="2.500" stroke="#123"/>
<path d="M745 260L718 1270" stroke-width="10" stroke-linecap="butt"/>
<path d="M745 70L745 270" stroke-width="5"/>
</g>
<path d="M172 1130V1015" stroke="#0000e0" stroke-width="3"/><path d="M172 1130L78 1122" stroke="#e01010" stroke-width="3"/><path d="M172 1130L250 1120" stroke="#10d010" stroke-width="3"/>
</g></svg>
<rect x="781" y="134" width="67" height="20" fill="#0a8dd6"/>
<path d="M838.500 136V153" stroke="#123"/><path d="M839 141h8l-4 4.500z" fill="#000"/>

<!-- front viewport -->
<rect x="0" y="552" width="777" height="411" fill="#a8a8a8"/>
<svg x="0" y="545" width="780" height="420" viewBox="0 0 1568 1260" preserveAspectRatio="none">
<rect x="0" y="20" width="500" height="1240" fill="url(#fg)"/>
<path d="M497 1260V155Q497 30 585 20V117Q555 125 555 155V1260Z" fill="#a8a8a8"/>
<rect x="515" y="155" width="40" height="1105" fill="#b4b4b4"/>
<rect x="585" y="20" width="983" height="32" fill="#a8a8a8"/>
<rect x="585" y="52" width="983" height="65" fill="#a2a2a2"/>
<rect x="555" y="117" width="1013" height="111" fill="#aaaaaa"/>
<rect x="555" y="117" width="45" height="1143" fill="#b0b0b0"/>
<path d="M600 310Q600 232 655 228H1562V300H645L640 420 600 320Z" fill="url(#tp)"/>
<rect x="600" y="320" width="40" height="940" fill="#8c8c8c"/>
<rect x="622" y="345" width="20" height="915" fill="#9c9c9c"/>
<path d="M641 1260V420L647 305H1562V1260Z" fill="#060606"/>
<path d="M647 303H1562V345H647Z" fill="#010101"/>
<ellipse cx="1400" cy="195" rx="70" ry="105" fill="url(#hd)"/>
<ellipse cx="1430" cy="200" rx="62" ry="100" fill="url(#hl)"/>
<ellipse cx="1410" cy="210" rx="35" ry="52" fill="#000"/>
<g fill="none" stroke="#000">
<path d="M497 1260V100Q497 30 575 20" stroke-width="3" vector-effect="non-scaling-stroke"/>
<path d="M515 1260V155Q515 90 585 52" stroke-width="1.500" vector-effect="non-scaling-stroke"/>
<path d="M555 1260V150Q560 120 585 117H1562" stroke-width="2.500" vector-effect="non-scaling-stroke"/>
<path d="M585 20V117M585 52H1562M520 60L560 125" stroke-width="2" vector-effect="non-scaling-stroke"/>
<path d="M500 152Q525 160 555 157" stroke-width="2.500" vector-effect="non-scaling-stroke"/>
<path d="M600 1260V310Q600 232 655 228H1562" stroke-width="3" vector-effect="non-scaling-stroke"/>
<path d="M622 1260V340Q630 285 680 285H1562" stroke-width="2" vector-effect="non-scaling-stroke"/>
<path d="M655 232L695 340M600 320L640 415" stroke-width="1.500" vector-effect="non-scaling-stroke"/>
<path d="M1402 20V300" stroke-width="3" vector-effect="non-scaling-stroke"/>
</g>
<path d="M1402 300V1260" stroke="#1a1a1a" stroke-width="1" vector-effect="non-scaling-stroke"/>
<path d="M73 1000V1120" stroke="#0000f0" stroke-width="1" vector-effect="non-scaling-stroke"/>
<path d="M73 1120H152" stroke="#f00000" stroke-width="1.500" vector-effect="non-scaling-stroke"/>
</svg>
<rect x="0" y="552" width="57" height="20" fill="#c8ccd3"/>
<path d="M46.500 554V571" stroke="#666"/><path d="M48 559h7l-3.500 4z" fill="#333"/>

<!-- left viewport -->
<rect x="780" y="552" width="381" height="411" fill="#cfd0d0"/>
<rect x="1161" y="552" width="1" height="411" fill="#9ea2a6"/>
<rect x="1162" y="552" width="405" height="411" fill="url(#dk)"/>
<rect x="1162" y="552" width="405" height="411" fill="url(#dkv)"/>
<svg x="775" y="545" width="800" height="420" viewBox="0 0 1568 1260" preserveAspectRatio="none">
<path d="M412 20H582L458 1180Q455 1250 415 1250L285 1220Z" fill="url(#sd)"/>
<path d="M300 1135L458 1175 455 1210Q440 1250 415 1250L285 1220Z" fill="#8f8f8f"/>
<g fill="none" stroke="#000">
<path d="M412 20L285 1220" stroke-width="2.500" vector-effect="non-scaling-stroke"/>
<path d="M425 20L318 940" stroke-width="1.500" vector-effect="non-scaling-stroke"/>
<path d="M440 20L345 900" stroke-width="2.500" vector-effect="non-scaling-stroke"/>
<path d="M495 20L370 1215" stroke-width="2" vector-effect="non-scaling-stroke"/>
<path d="M543 20L415 1250" stroke-width="2.500" vector-effect="non-scaling-stroke"/>
<path d="M570 20L450 1180" stroke-width="2" vector-effect="non-scaling-stroke"/>
<path d="M582 20L458 1180" stroke-width="2" vector-effect="non-scaling-stroke"/>
<path d="M345 900V950L310 1005 318 940Z" stroke-width="2" vector-effect="non-scaling-stroke"/>
<path d="M298 1135L458 1175" stroke-width="3" vector-effect="non-scaling-stroke"/>
<path d="M290 1197L415 1222" stroke-width="2" vector-effect="non-scaling-stroke"/>
<path d="M285 1220L415 1250Q455 1250 458 1175" stroke-width="2.500" vector-effect="non-scaling-stroke"/>
</g>
<path d="M103 1000V1120" stroke="#0000f0" stroke-width="1" vector-effect="non-scaling-stroke"/>
<path d="M103 1120H25" stroke="#00e000" stroke-width="1.500" vector-effect="non-scaling-stroke"/>
</svg>
<rect x="781" y="552" width="49" height="20" fill="#d8dbdd"/>
<path d="M821.500 554V571" stroke="#777"/><path d="M823 559h6l-3 4z" fill="#555"/>

<!-- frames and lower background -->
<rect x="0" y="963" width="1575" height="37" fill="#e0e3ec"/>
<rect x="0" y="963" width="1568" height="1" fill="#a8afbd"/>
<rect x="0" y="549" width="1568" height="2" fill="#a8afbd"/>
<rect x="778" y="134" width="1" height="829" fill="#a8afbd"/>
<rect x="1567" y="134" width="1" height="829" fill="#a8afbd"/>

<!-- layer panel -->
<rect x="1576" y="136" width="267" height="1" fill="#bcc1cc"/><rect x="1576" y="138" width="267" height="1" fill="#bcc1cc"/>
<rect x="1575.500" y="143.500" width="239" height="819" fill="#fff" stroke="#a8afbd"/>
<rect x="1576" y="180" width="238" height="1" fill="#dfe1e6"/>
<g fill="#e3e5e9"><rect x="1704" y="181" width="1" height="24"/><rect x="1722" y="181" width="1" height="24"/><rect x="1739" y="181" width="1" height="24"/><rect x="1755" y="181" width="1" height="24"/><rect x="1772" y="181" width="1" height="24"/>
<rect x="1576" y="225" width="235" height="1"/><rect x="1576" y="246" width="235" height="1"/><rect x="1576" y="267" width="235" height="1"/><rect x="1576" y="288" width="235" height="1"/><rect x="1576" y="309" width="235" height="1"/><rect x="1576" y="330" width="235" height="1"/><rect x="1576" y="351" width="235" height="1"/></g>
<rect x="1576" y="947" width="235" height="16" fill="#efefef"/><rect x="1593" y="954" width="86" height="2" fill="#888"/>
<g fill="#f6f6f6"><circle cx="1783" cy="215" r="7.500"/><circle cx="1783" cy="236" r="7.500"/><circle cx="1783" cy="257" r="7.500"/><circle cx="1783" cy="278" r="7.500"/><circle cx="1783" cy="299" r="7.500"/><circle cx="1783" cy="320" r="7.500"/><circle cx="1783" cy="341" r="7.500"/></g>
<path d="M1707 216l4 4 8-8" fill="none" stroke="#111" stroke-width="1.400"/>
<g stroke="#000" stroke-width="1"><rect x="1758.500" y="209.500" width="11" height="11" fill="#000"/><rect x="1758.500" y="230.500" width="11" height="11" fill="#f00000"/><rect x="1758.500" y="251.500" width="11" height="11" fill="#0090ff"/><rect x="1758.500" y="272.500" width="11" height="11" fill="#10e010"/><rect x="1758.500" y="293.500" width="11" height="11" fill="#ff0090"/><rect x="1758.500" y="314.500" width="11" height="11" fill="#000"/><rect x="1758.500" y="335.500" width="11" height="11" fill="#000"/></g>
<g stroke="#6b5a10" stroke-width=".9">
<g fill="#ffe574"><path d="M1726 235a4.500 4.500 0 1 1 8 0l-2 3v3h-4v-3z"/><path d="M1726 256a4.500 4.500 0 1 1 8 0l-2 3v3h-4v-3z"/><path d="M1726 277a4.500 4.500 0 1 1 8 0l-2 3v3h-4v-3z"/><path d="M1726 298a4.500 4.500 0 1 1 8 0l-2 3v3h-4v-3z"/></g>
<g fill="#5b8fe0" stroke="#1d3f80"><path d="M1726 319a4.500 4.500 0 1 1 8 0l-2 3v3h-4v-3z"/><path d="M1726 340a4.500 4.500 0 1 1 8 0l-2 3v3h-4v-3z"/></g>
</g>
<g fill="#ffe878" stroke="#6a5a10"><rect x="1741.500" y="234.500" width="10" height="8"/><rect x="1741.500" y="255.500" width="10" height="8"/><rect x="1741.500" y="276.500" width="10" height="8"/><rect x="1741.500" y="297.500" width="10" height="8"/><rect x="1741.500" y="318.500" width="10" height="8"/><rect x="1741.500" y="339.500" width="10" height="8"/></g>
<g fill="none" stroke="#333"><path d="M1748 234v-1a2.500 2.500 0 0 1 5 0v1"/><path d="M1748 255v-1a2.500 2.500 0 0 1 5 0v1"/><path d="M1748 276v-1a2.500 2.500 0 0 1 5 0v1"/><path d="M1748 297v-1a2.500 2.500 0 0 1 5 0v1"/><path d="M1748 318v-1a2.500 2.500 0 0 1 5 0v1"/><path d="M1748 339v-1a2.500 2.500 0 0 1 5 0v1"/></g>
<!-- panel toolbar -->
<path d="M1587.500 156.500h7l3 3v10h-10z" fill="#fff" stroke="#333"/>
<g fill="#c4c4c4" stroke="#aaa"><path d="M1608.500 156.500h6v9h-6z"/><path d="M1612.500 160.500h5l2 2v7h-7z"/></g>
<path d="M1632 157l12 12M1644 157l-12 12" stroke="#c4c4c4" stroke-width="2.800"/>
<path d="M1654 166l7-7 7 7z" fill="#b5b5b5"/><path d="M1676 160l7 7 7-7z" fill="#b5b5b5"/><path d="M1710 156l-8 7 8 7z" fill="#a8a8a8"/>
<path d="M1722 157h14l-5 7v7l-4-2v-5z" fill="#3a6bd0" stroke="#111"/><path d="M1736 171h3v-3z" fill="#222"/>
<path d="M1746.500 156.500h7l3 3v10h-10z" fill="#ccc" stroke="#999"/><path d="M1757 171h3v-3z" fill="#444"/>
<path d="M1768 169l7-8-2-2 5-3 5 3 1 3-4-2-3 3-7 8z" fill="#1c3060"/><path d="M1781 171h3v-3z" fill="#222"/>
<circle cx="1797" cy="163" r="7" fill="#3050c8"/><text x="1797" y="168" text-anchor="middle" font-size="12" font-weight="bold" fill="#fff" font-family="Liberation Sans">?</text>

<!-- right side tabs -->
<path d="M1814 143H1840Q1844 143 1844 147V510L1815 540H1814Z" fill="#fff"/>
<g fill="none" stroke="#a8afbd"><path d="M1814 200V143.500H1840Q1844 143.500 1844 147V510"/><path d="M1814.500 258V540"/>
<path d="M1844 187L1830 200M1844 243L1815 267M1844 337L1815 360M1844 395L1815 425M1844 453L1815 483M1844 510L1815 540" stroke="#c8ccd4"/></g>
<rect x="1813" y="201" width="3" height="57" fill="#fff"/>
<rect x="1843" y="66" width="2" height="954" fill="#c4c8d0"/>
<circle cx="1828" cy="155" r="5.500" fill="none" stroke="#e03090" stroke-width="3"/><path d="M1828 149.500a5.500 5.500 0 0 1 5.500 5.500" fill="none" stroke="#f0c020" stroke-width="3"/><path d="M1833.500 155a5.500 5.500 0 0 1-5.500 5.500" fill="none" stroke="#30b050" stroke-width="3"/><path d="M1828 160.500a5.500 5.500 0 0 1-5.500-5.500" fill="none" stroke="#3080e0" stroke-width="3"/>
<path d="M1820 207L1835 206V218L1827 222 1820 216Z" fill="#e0501e"/><path d="M1820 216L1827 222 1835 218" stroke="#2a3f80" stroke-width="2" fill="none"/>
<rect x="1822" y="268" width="14" height="10" rx="1" fill="#444"/><circle cx="1829" cy="273" r="3.500" fill="#222" stroke="#999"/><rect x="1825" y="266" width="5" height="3" fill="#444"/>
<rect x="1820" y="358" width="15" height="11" fill="#8a8f98" stroke="#222"/><rect x="1825" y="369" width="5" height="2" fill="#222"/><rect x="1821" y="371" width="13" height="2" fill="#222"/>
<path d="M1823 426V420Q1823 415 1828 415T1834 420V426L1836 429H1821Z" fill="#fff" stroke="#333"/>
<path d="M1822 486L1834 474" stroke="#999" stroke-width="5"/><circle cx="1830" cy="478" r="3" fill="#d84020"/>
<g transform="translate(1838,957)" fill="none" stroke="#b8bec8"><circle r="2"/><circle r="5.500" stroke-width="2" stroke-dasharray="2 2.300"/></g>

<!-- status row -->
<rect x="0" y="1000" width="1845" height="1" fill="#a8afbd"/>
<rect x="0" y="1018.500" width="1845" height="1.500" fill="#eef0f4"/>
<g fill="#a8afbd"><rect x="73" y="1001" width="1" height="18"/><rect x="161" y="1001" width="1" height="18"/><rect x="249" y="1001" width="1" height="18"/><rect x="337" y="1001" width="1" height="18"/><rect x="585" y="1001" width="1" height="18"/><rect x="648" y="1001" width="1" height="18"/><rect x="686" y="1001" width="1" height="18"/><rect x="747" y="1001" width="1" height="18"/><rect x="809" y="1001" width="1" height="18"/><rect x="871" y="1001" width="1" height="18"/><rect x="921" y="1001" width="1" height="18"/><rect x="1007" y="1001" width="1" height="18"/><rect x="1057" y="1001" width="1" height="18"/></g>
<g fill="#e8f2fc"><rect x="687" y="1001" width="60" height="17"/><rect x="748" y="1001" width="61" height="17"/><rect x="872" y="1001" width="49" height="17"/><rect x="922" y="1001" width="85" height="17"/></g>
<rect x="341" y="1005" width="14" height="13" fill="#000"/>
<g><rect x="45.500" y="978.500" width="12" height="13" rx="3" fill="#0f63ba"/><rect x="81.500" y="978.500" width="12" height="13" rx="3" fill="#0f63ba"/><rect x="130.500" y="978.500" width="12" height="13" rx="3" fill="#0f63ba"/><rect x="191.500" y="978.500" width="12" height="13" rx="3" fill="#0f63ba"/><rect x="240.500" y="978.500" width="12" height="13" rx="3" fill="#0f63ba"/><rect x="339.500" y="978.500" width="12" height="13" rx="3" fill="#0f63ba"/>
<g fill="none" stroke="#fff" stroke-width="1.300"><path d="M48 985l3 3 4-5"/><path d="M84 985l3 3 4-5"/><path d="M133 985l3 3 4-5"/><path d="M194 985l3 3 4-5"/><path d="M243 985l3 3 4-5"/><path d="M342 985l3 3 4-5"/></g>
<g fill="#fafafa" stroke="#555"><rect x="291" y="979" width="12" height="13" rx="3"/><rect x="402" y="979" width="12" height="13" rx="3"/><rect x="451" y="979" width="12" height="13" rx="3"/></g>
<circle cx="505" cy="985" r="5.500" fill="#fff"/><circle cx="567" cy="985" r="5.500" fill="#fff"/></g>
</svg>

<!-- text -->
<div class="t cmd" style="left:-4px;top:-6px">或多重曲面组合为 <span style="color:#a03040">1</span> 个开放的多重曲面。</div>
<div class="t cmd" style="left:-6px;top:17px">格... 按 Esc 取消</div>

<div class="t c" style="left:48px;top:72px">卓尔谟犀牛</div>
<div class="t c" style="left:149px;top:72px">SubD工具</div>
<div class="t c" style="left:244px;top:72px">TSR-A面</div>
<div class="t c" style="left:328px;top:73px">VRay5</div>
<div class="t c" style="left:391px;top:73px">V7</div>
<div class="t c" style="left:443px;top:73px">V6</div>
<div class="t c" style="left:495px;top:73px">V5</div>
<div class="t c" style="left:552px;top:73px">PeT</div>
<div class="t c" style="left:612px;top:73px">WB</div>
<div class="t c" style="left:666px;top:73px">PT</div>
<div class="t c" style="left:716px;top:73px">JS</div>
<div class="t c" style="left:786px;top:72px">工作平面</div>
<div class="t c" style="left:877px;top:72px">设置视图</div>
<div class="t c" style="left:954px;top:72px">显示</div>
<div class="t c" style="left:1018px;top:72px">选取</div>
<div class="t c" style="left:1108px;top:72px">工作视窗配置</div>
<div class="t c" style="left:1206px;top:72px">可见性</div>
<div class="t c" style="left:1276px;top:72px">变动</div>
<div class="t c" style="left:1353px;top:72px">曲线工具</div>
<div class="t c" style="left:1445px;top:72px">曲面工具</div>
<div class="t c" style="left:1535px;top:72px">实体工具</div>
<div class="t c" style="left:1626px;top:72px">网格工具</div>
<div class="t c" style="left:1717px;top:72px">渲染工具</div>
<div class="t c" style="left:1794px;top:72px">出图</div>
<div class="t b" style="left:1817px;top:71px;font-size:12px">»</div>

<div class="t" style="left:-3px;top:135px;color:#444">顶视图</div>
<div class="t" style="left:-3px;top:554px;color:#444">前视图</div>
<div class="t" style="left:789px;top:135px">透视图</div>
<div class="t b" style="left:788px;top:554px;color:#555;font-size:12.500px">Left</div>

<div class="t" style="left:35px;top:449px;color:#10e010;font-size:19px">y</div>
<div class="t" style="left:78px;top:490px;color:#f01010;font-size:19px">x</div>
<div class="t" style="left:37px;top:867px;color:#1010f0;font-size:19px">z</div>
<div class="t" style="left:78px;top:905px;color:#f01010;font-size:19px">x</div>
<div class="t" style="left:828px;top:450px;color:#1010f0;font-size:19px">z</div>
<div class="t" style="left:797px;top:486px;color:#f01010;font-size:19px">x</div>
<div class="t" style="left:855px;top:483px;color:#10e010;font-size:19px">y</div>
<div class="t" style="left:828px;top:867px;color:#1010f0;font-size:19px">z</div>
<div class="t" style="left:787px;top:904px;color:#10e010;font-size:19px">y</div>

<div class="t" style="left:1581px;top:185px">图层</div>
<div class="t" style="left:1778px;top:185px">材质</div>
<div class="t b" style="left:1585px;top:208px">默认</div>
<div class="t" style="left:1585px;top:229px">线条</div>
<div class="t" style="left:1585px;top:250px">图层 01</div>
<div class="t" style="left:1585px;top:271px">图层 02</div>
<div class="t" style="left:1585px;top:292px">图层 03</div>
<div class="t" style="left:1585px;top:313px;letter-spacing:.4px">Vray Dome</div>
<div class="t" style="left:1585px;top:334px;letter-spacing:.4px">HDR Dome</div>

<div class="t v" style="top:164px">属</div><div class="t v" style="top:176px">性</div>
<div class="t v" style="top:222px">图</div><div class="t v" style="top:234px">层</div>
<div class="t v" style="top:280px">已</div><div class="t v" style="top:292px">命</div><div class="t v" style="top:304px">名</div><div class="t v" style="top:316px">视</div><div class="t v" style="top:328px">图</div>
<div class="t v" style="top:376px">显</div><div class="t v" style="top:388px">示</div>
<div class="t v" style="top:432px">通</div><div class="t v" style="top:444px">知</div>
<div class="t v" style="top:491px">材</div><div class="t v" style="top:503px">质</div>

<div class="t" style="left:-1px;top:977px">最近点</div>
<div class="t" style="left:61px;top:977px">点</div>
<div class="t" style="left:98px;top:977px">中点</div>
<div class="t" style="left:147px;top:977px">中心点</div>
<div class="t" style="left:208px;top:977px">交点</div>
<div class="t" style="left:257px;top:977px">垂点</div>
<div class="t" style="left:307px;top:977px">切点</div>
<div class="t" style="left:356px;top:977px">四分点</div>
<div class="t" style="left:417px;top:977px">节点</div>
<div class="t" style="left:466px;top:977px">顶点</div>
<div class="t" style="left:515px;top:977px">投影</div>
<div class="t" style="left:577px;top:977px">停用</div>

<div style="position:absolute;left:0;top:1001px;width:1845px;height:18px;overflow:hidden">
<div class="t" style="left:0;top:2px;letter-spacing:.6px">x 145.736</div>
<div class="t" style="left:87px;top:2px;letter-spacing:.6px">y 258.900</div>
<div class="t" style="left:183px;top:2px;letter-spacing:.4px">z 0.000</div>
<div class="t" style="left:281px;top:2px">毫米</div>
<div class="t" style="left:357px;top:2px">默认</div>
<div class="t" style="left:591px;top:2px">锁定格点</div>
<div class="t" style="left:654px;top:2px">正交</div>
<div class="t b" style="left:691px;top:2px">平面模式</div>
<div class="t b" style="left:753px;top:2px">物件锁点</div>
<div class="t" style="left:815px;top:2px">智慧轨迹</div>
<div class="t b" style="left:877px;top:2px">操作轴</div>
<div class="t b" style="left:926px;top:2px">记录建构历史</div>
<div class="t" style="left:1012px;top:2px">过滤器</div>
<div class="t" style="left:1059px;top:2px;letter-spacing:.25px">可用的物理内存: 19220 MB</div>
</div>
</body></html>
